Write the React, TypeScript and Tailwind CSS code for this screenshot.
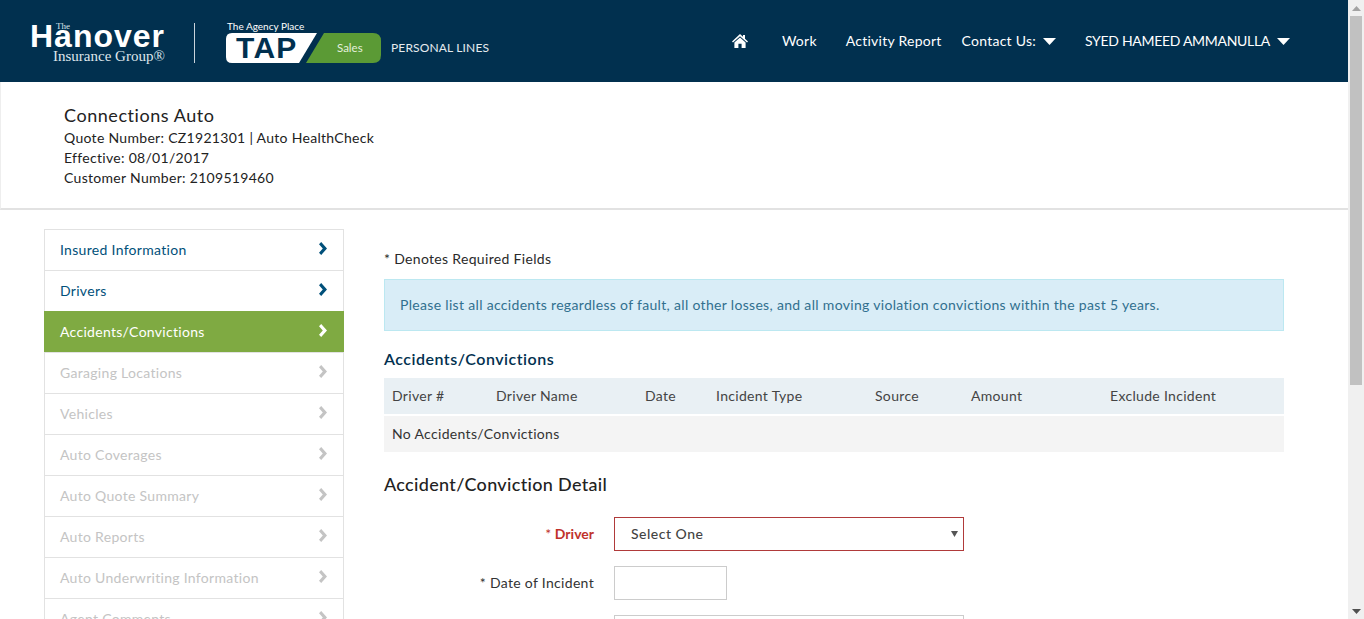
import React from "react";

const sideItems = [
  { label: "Insured Information", state: "done" },
  { label: "Drivers", state: "done" },
  { label: "Accidents/Convictions", state: "active" },
  { label: "Garaging Locations", state: "off" },
  { label: "Vehicles", state: "off" },
  { label: "Auto Coverages", state: "off" },
  { label: "Auto Quote Summary", state: "off" },
  { label: "Auto Reports", state: "off" },
  { label: "Auto Underwriting Information", state: "off" },
  { label: "Agent Comments", state: "off" },
];

const columns = ["Driver #", "Driver Name", "Date", "Incident Type", "Source", "Amount", "Exclude Incident"];

function Chevron() {
  return (
    <svg width="8" height="13" viewBox="0 0 8 13" fill="currentColor" aria-hidden="true">
      <path d="M2.2 0 L8 6.5 L2.2 13 L0 10.8 L3.8 6.5 L0 2.2 Z" />
    </svg>
  );
}

function Caret() {
  return (
    <svg width="13" height="7" viewBox="0 0 13 7" fill="currentColor" aria-hidden="true">
      <path d="M0 0 H13 L6.5 7 Z" />
    </svg>
  );
}

function HomeIcon() {
  return (
    <svg width="16" height="14" viewBox="0 0 16 14" fill="currentColor" aria-hidden="true">
      <path d="M8 0 L11 2.8 V1 H13 V4.7 L16 7.5 L15 8.4 L8 2.2 L1 8.4 L0 7.5 Z" />
      <path d="M8 3.6 L13.6 8.6 V14 H9.6 V9.8 H6.4 V14 H2.4 V8.6 Z" />
    </svg>
  );
}

function Logos() {
  return (
    <div className="flex items-center">
      <div className="w-[134px] ml-[30px] text-white relative h-[42px]">
        <span className="absolute left-[26px] top-[2px] text-[9px] leading-[9px] text-[#dfe6ec] font-['Liberation_Serif',serif]">The</span>
        <span className="absolute left-0 top-[5px] text-[32px] leading-[22px] font-bold tracking-[1px] font-['Liberation_Sans',sans-serif]">Hanover</span>
        <span className="absolute left-[23px] top-[30px] text-[15px] leading-[13px] whitespace-nowrap font-['Liberation_Serif',serif] text-[#dfe6ec]">Insurance Group®</span>
      </div>
      <div className="w-px h-[40px] bg-[#c9d3db] ml-[30px] mt-[4px]" />
      <div className="ml-[31px] relative w-[155px] h-[42px] text-white">
        <span className="absolute left-[1px] top-[1px] text-[10px] leading-[11px] whitespace-nowrap">The Agency Place</span>
        <svg className="absolute left-0 top-[13px]" width="155" height="30" viewBox="0 0 155 30" aria-hidden="true">
          <path d="M6 0 H91 L73 30 H6 Q0 30 0 24 V6 Q0 0 6 0 Z" fill="#fff" />
          <path d="M98 0 H147 Q155 0 155 8 V22 Q155 30 147 30 H80 Z" fill="#5b9a35" />
        </svg>
        <span className="absolute left-[10px] top-[12px] text-[30px] leading-[32px] font-bold text-[#01304f] tracking-[1.3px] font-['Liberation_Sans',sans-serif]">TAP</span>
        <span className="absolute left-[111px] top-[21px] text-[11.5px] leading-[14px] text-[#e4efdc]">Sales</span>
      </div>
      <span className="ml-[10px] mt-[14px] text-[12px] tracking-[0.15px] text-[#e6ebef] whitespace-nowrap">PERSONAL LINES</span>
    </div>
  );
}

function TopNav() {
  return (
    <nav className="flex items-center text-[14px] text-white mr-[58px] mt-[-1px] tracking-[0.25px]">
      <HomeIcon />
      <span className="ml-[34px]">Work</span>
      <span className="ml-[29px]">Activity Report</span>
      <span className="ml-[20px]">Contact Us:</span>
      <span className="ml-[7px] mt-[2px]"><Caret /></span>
      <span className="ml-[29px] tracking-[-0.3px]">SYED HAMEED AMMANULLA</span>
      <span className="ml-[7px] mt-[2px]"><Caret /></span>
    </nav>
  );
}

function SideNav() {
  return (
    <aside className="w-[300px] shrink-0 border border-[#e2e2e2] border-b-0 h-fit tracking-[0.3px]">
      {sideItems.map((item) => (
        <div
          key={item.label}
          className={
            "flex items-center justify-between text-[14px] border-b border-[#e2e2e2] " +
            (item.state === "done"
              ? "h-[41px] pl-[15px] pr-[16px] text-[#01507a]"
              : item.state === "active"
                ? "h-[42px] -mt-px -mx-px pl-[16px] pr-[17px] bg-[#7faa42] text-white"
                : "h-[41px] pl-[15px] pr-[16px] text-[#c4c4c4]")
          }
        >
          <span className={item.state === "active" ? "" : "-mt-[2px]"}>{item.label}</span>
          <span className="-mt-[3px]"><Chevron /></span>
        </div>
      ))}
    </aside>
  );
}

function Content() {
  return (
    <section className="ml-[40px] w-[900px] text-[14px] text-[#2a2a2a] tracking-[0.32px]">
      <p className="mt-[19px] leading-[22px]">* Denotes Required Fields</p>
      <div className="mt-[9px] h-[52px] flex items-center px-[15px] pb-[2px] bg-[#d9edf7] border border-[#bce8f1] text-[#31708f]">
        Please list all accidents regardless of fault, all other losses, and all moving violation convictions within the past 5 years.
      </div>
      <h3 className="mt-[17px] text-[16px] leading-[22px] font-semibold tracking-[0.5px] text-[#01304f]">Accidents/Convictions</h3>
      <div className="mt-[8px] h-[36px] pb-[2px] bg-[#e9f0f4] grid grid-cols-[104px_149px_71px_159px_96px_139px_1fr] items-center px-[8px] text-[#444]">
        {columns.map((c) => (
          <span key={c}>{c}</span>
        ))}
      </div>
      <div className="mt-[2px] h-[36px] pb-[2px] bg-[#f4f4f4] flex items-center px-[8px] text-[#333]">No Accidents/Convictions</div>
      <h2 className="mt-[20px] text-[18px] leading-[24px] font-medium text-[#222]">Accident/Conviction Detail</h2>
      <div className="mt-[21px] flex items-center">
        <label className="w-[210px] pb-[2px] text-right font-bold text-[#c0322b] tracking-normal"><span className="font-normal">* </span>Driver</label>
        <div className="ml-[20px] w-[350px] h-[34px] border border-[#b03a3a] flex items-center justify-between pl-[16px] pr-[5px] text-[#444] font-medium tracking-[0.5px]">
          <span className="-mt-[2px]">Select One</span>
          <svg width="7" height="6" viewBox="0 0 7 6" fill="#555" aria-hidden="true"><path d="M0 0 H7 L3.5 6 Z" /></svg>
        </div>
      </div>
      <div className="mt-[15px] flex items-center">
        <label className="w-[210px] pb-[2px] text-right text-[#333]">* Date of Incident</label>
        <div className="ml-[20px] w-[113px] h-[34px] border border-[#ccc]" />
      </div>
      <div className="mt-[15px] ml-[230px] w-[350px] h-[34px] border border-[#ccc]" />
    </section>
  );
}

function Scrollbar() {
  return (
    <div className="w-[16px] shrink-0 h-full bg-[#f0f0f0] flex flex-col items-center">
      <div className="h-[16px] flex items-center justify-center">
        <svg width="9" height="5" viewBox="0 0 9 5" fill="#a3a3a3" aria-hidden="true"><path d="M4.5 0 L9 5 H0 Z" /></svg>
      </div>
      <div className="w-[12px] h-[369px] bg-[#c1c1c1]" />
      <div className="flex-1" />
      <div className="h-[16px] flex items-center justify-center">
        <svg width="9" height="5" viewBox="0 0 9 5" fill="#505050" aria-hidden="true"><path d="M0 0 H9 L4.5 5 Z" /></svg>
      </div>
    </div>
  );
}

export default function App() {
  return (
    <div className="flex h-[619px] w-[1364px] overflow-hidden bg-white font-['Lato',sans-serif]">
      <div className="w-[1348px] shrink-0 overflow-hidden">
        <header className="h-[82px] bg-[#01304f] flex items-center justify-between">
          <Logos />
          <TopNav />
        </header>
        <div className="h-[128px] border-b-2 border-l border-[#e2e2e2] border-l-[#eeeeee] pl-[63px] pt-[21px] text-[14px] leading-[20px] text-[#222] tracking-[0.3px]">
          <h1 className="text-[18px] leading-[25px] tracking-[0.55px] text-[#222]">Connections Auto</h1>
          <p>Quote Number: CZ1921301 | Auto HealthCheck</p>
          <p>Effective: 08/01/2017</p>
          <p>Customer Number: 2109519460</p>
        </div>
        <main className="flex pl-[44px] pt-[19px]">
          <SideNav />
          <Content />
        </main>
      </div>
      <Scrollbar />
    </div>
  );
}
